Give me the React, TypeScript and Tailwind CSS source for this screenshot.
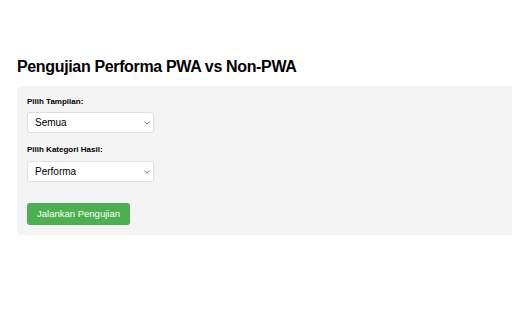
import React from "react";

function Chevron() {
  return (
    <svg width="6" height="4" viewBox="0 0 6 4" className="absolute right-[3px] top-1/2 -translate-y-1/2" fill="none">
      <path d="M0.5 0.8 L3 3.2 L5.5 0.8" stroke="#555" strokeWidth="0.9" />
    </svg>
  );
}

function Select({ value }: { value: string }) {
  return (
    <div className="relative w-[127px] h-[21px] bg-white border border-[#e0e0e0] rounded-[3px] flex items-center pl-[7px] text-[10px] text-black">
      {value}
      <Chevron />
    </div>
  );
}

export default function App() {
  return (
    <div className="w-[512px] h-[320px] overflow-hidden bg-white" style={{ fontFamily: '"Liberation Sans", Arial, sans-serif' }}>
      <div className="pl-[17px] pt-[57px]">
        <h1 className="text-[16px] leading-[20px] font-bold text-black tracking-[-0.35px] mb-[9px]">
          Pengujian Performa PWA vs Non-PWA
        </h1>
        <div className="w-[520px] bg-[#f4f4f4] rounded-[5px] pl-[10px] pt-[10px] pb-[10px]">
          <div className="text-[8px] leading-[10px] font-bold text-black mt-[1px]">Pilih Tampilan:</div>
          <div className="mt-[5px]">
            <Select value="Semua" />
          </div>
          <div className="text-[8px] leading-[10px] font-bold text-black mt-[12px]">Pilih Kategori Hasil:</div>
          <div className="mt-[6px]">
            <Select value="Performa" />
          </div>
          <button className="mt-[21px] w-[103px] h-[22px] bg-[#4caf50] rounded-[3px] text-white text-[9.5px] flex items-center justify-center">
            Jalankan Pengujian
          </button>
        </div>
      </div>
    </div>
  );
}
